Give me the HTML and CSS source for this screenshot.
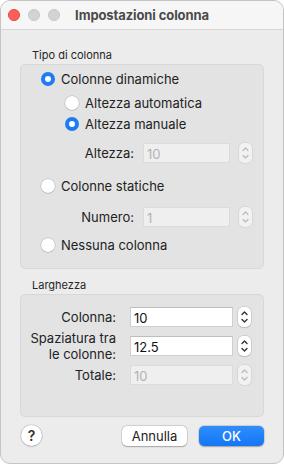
FILE: index.html
```html
<!DOCTYPE html>
<html lang="it">
  <head>
    <meta charset="utf-8"/>
    <title>Impostazioni colonna</title>
    <link rel="stylesheet" href="styles.css">
  </head>

  <body>
    <div class="window">
      <div class="titlebar">
        <div class="lights">
          <span class="light red"></span>
          <span class="light"></span>
          <span class="light"></span>
        </div>
        <div class="title">Impostazioni colonna</div>
        <div></div>
      </div>

      <div class="content">
        <div class="section-label">Tipo di colonna</div>
        <div class="group group-type">
          <div class="radio-row row-1"><span class="radio on"></span>Colonne dinamiche</div>
          <div class="radio-row sub row-2"><span class="radio"></span>Altezza automatica</div>
          <div class="radio-row sub row-3"><span class="radio on"></span>Altezza manuale</div>
          <div class="field-row narrow row-4">
            <label>Altezza:</label>
            <div class="input disabled">10</div>
            <div class="stepper disabled">
              <svg width="13" height="20" viewBox="0 0 13 20"><path d="M4 7.5 L6.5 5 L9 7.5 M4 12.5 L6.5 15 L9 12.5"/></svg>
            </div>
          </div>
          <div class="radio-row row-5"><span class="radio"></span>Colonne statiche</div>
          <div class="field-row narrow row-6">
            <label>Numero:</label>
            <div class="input disabled">1</div>
            <div class="stepper disabled">
              <svg width="13" height="20" viewBox="0 0 13 20"><path d="M4 7.5 L6.5 5 L9 7.5 M4 12.5 L6.5 15 L9 12.5"/></svg>
            </div>
          </div>
          <div class="radio-row row-7"><span class="radio"></span>Nessuna colonna</div>
        </div>

        <div class="section-label second">Larghezza</div>
        <div class="group group-width">
          <div class="field-row wide">
            <label>Colonna:</label>
            <div class="input">10</div>
            <div class="stepper">
              <svg width="13" height="20" viewBox="0 0 13 20"><path d="M4 7.5 L6.5 5 L9 7.5 M4 12.5 L6.5 15 L9 12.5"/></svg>
            </div>
          </div>
          <div class="field-row wide tall">
            <label>Spaziatura tra<br>le colonne:</label>
            <div class="input">12.5</div>
            <div class="stepper">
              <svg width="13" height="20" viewBox="0 0 13 20"><path d="M4 7.5 L6.5 5 L9 7.5 M4 12.5 L6.5 15 L9 12.5"/></svg>
            </div>
          </div>
          <div class="field-row wide">
            <label>Totale:</label>
            <div class="input disabled">10</div>
            <div class="stepper disabled">
              <svg width="13" height="20" viewBox="0 0 13 20"><path d="M4 7.5 L6.5 5 L9 7.5 M4 12.5 L6.5 15 L9 12.5"/></svg>
            </div>
          </div>
        </div>

        <div class="footer">
          <button class="help">?</button>
          <div class="actions">
            <button class="btn">Annulla</button>
            <button class="btn primary">OK</button>
          </div>
        </div>
      </div>
    </div>
  </body>
</html>
```

FILE: styles.css
```css
* {
  box-sizing: border-box;
}

body {
  margin: 0;
  background: #fff;
  color: #222;
  font: 13px / 16px Inter, "Noto Sans", sans-serif;
}

.window {
  width: 284px;
  height: 464px;
  background: #ececec;
  border: 1px solid #c4c4c4;
  border-radius: 10px;
  overflow: hidden;
}

/* title bar */
.titlebar {
  height: 29px;
  display: grid;
  grid-template-columns: 1fr auto 1fr;
  align-items: center;
  background: #f6f6f6;
  border-bottom: 1px solid #d6d6d6;
}

.lights {
  display: flex;
  gap: 8px;
  padding-left: 7px;
}

.light {
  width: 12px;
  height: 12px;
  border-radius: 50%;
  background: #d3d3d3;
  border: 0.5px solid #c6c6c6;
}

.light.red {
  background: #fe5f57;
  border-color: #e2463f;
}

.title {
  font-weight: 700;
  color: #4b4b4b;
  letter-spacing: -0.1px;
}

/* body */
.content {
  padding: 0 19px;
}

.section-label {
  font-size: 11px;
  line-height: 14px;
  margin: 18px 0 2px 12px;
  color: #262626;
}

.section-label.second {
  margin-top: 9px;
}

.group {
  background: #e3e3e3;
  border: 1px solid #d8d8d8;
  border-radius: 5px;
}

.group-type {
  padding: 4px 11px 13px 20px;
}

.group-width {
  padding: 12px 11px 31px 7px;
}

.radio-row {
  height: 20px;
  display: flex;
  align-items: center;
  gap: 6px;
}

.radio-row.sub {
  padding-left: 24px;
}

.row-2 { margin-top: 4px; }
.row-3 { margin-top: 1px; }
.row-4 { margin-top: 9px; }
.row-5 { margin-top: 13px; }
.row-6 { margin-top: 11px; }
.row-7 { margin-top: 8px; }

.radio {
  width: 14px;
  height: 14px;
  border-radius: 50%;
  background: #fff;
  box-shadow: 0 0 0 0.5px rgba(0, 0, 0, 0.2), 0 0.5px 1px rgba(0, 0, 0, 0.15);
  display: flex;
  align-items: center;
  justify-content: center;
}

.radio.on {
  background: #1d7bf5;
  box-shadow: none;
}

.radio.on::after {
  content: "";
  width: 6px;
  height: 6px;
  border-radius: 50%;
  background: #fff;
}

/* text fields */
.field-row {
  display: flex;
  align-items: center;
  height: 20px;
}

.field-row label {
  text-align: right;
}

.field-row.narrow label {
  width: 93px;
  margin-right: 9px;
}

.field-row.narrow .input {
  width: 87px;
  margin-right: 9px;
}

.field-row.wide {
  margin-top: 3px;
}

.field-row.wide:first-child {
  margin-top: 0;
}

.field-row.wide.tall {
  height: 32px;
}

.field-row.wide label {
  width: 88px;
  margin-right: 14px;
}

.field-row.wide .input {
  width: 103px;
  margin-right: 5px;
}

.input {
  height: 20px;
  padding: 1px 3px 0;
  line-height: 18px;
  background: #fff;
  border: 1px solid #cfcfcf;
  border-top-color: #bdbdbd;
  color: #111;
}

.input.disabled {
  background: #efefef;
  border-color: #dcdcdc;
  color: #b3b3b3;
}

.stepper {
  width: 13px;
  height: 20px;
  border-radius: 5px;
  background: #fff;
  box-shadow: 0 0 0 0.5px rgba(0, 0, 0, 0.15), 0 0.5px 1px rgba(0, 0, 0, 0.2);
}

.stepper svg {
  display: block;
}

.stepper path {
  fill: none;
  stroke: #333;
  stroke-width: 1.4;
  stroke-linecap: round;
  stroke-linejoin: round;
}

.stepper.disabled {
  background: #f2f2f2;
  box-shadow: 0 0 0 0.5px rgba(0, 0, 0, 0.1);
}

.stepper.disabled path {
  stroke: #bcbcbc;
}

/* buttons */
.footer {
  display: flex;
  justify-content: space-between;
  align-items: center;
  margin-top: 8px;
  padding-left: 1px;
}

.actions {
  display: flex;
  gap: 12px;
}

button {
  font: inherit;
  border: none;
  padding: 0;
  margin: 0;
}

.help {
  width: 21px;
  height: 21px;
  border-radius: 50%;
  background: #fff;
  box-shadow: 0 0 0 0.5px rgba(0, 0, 0, 0.15), 0 0.5px 1.5px rgba(0, 0, 0, 0.25);
  font-size: 14px;
  font-weight: 600;
  color: #333;
}

.btn {
  width: 65px;
  height: 20px;
  border-radius: 5px;
  background: #fff;
  color: #222;
  box-shadow: 0 0 0 0.5px rgba(0, 0, 0, 0.15), 0 0.5px 1.5px rgba(0, 0, 0, 0.25);
}

.btn.primary {
  background: linear-gradient(#2f8dfd, #1476f5);
  color: #fff;
  font-weight: 500;
}
```
